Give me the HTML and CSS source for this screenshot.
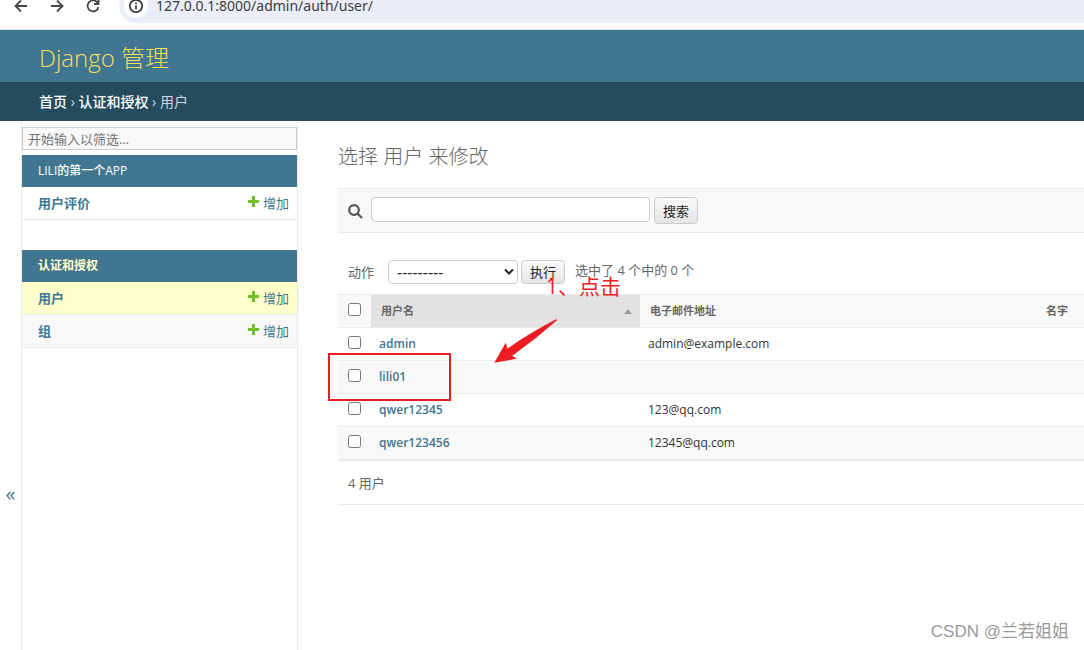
FILE: index.html
```html
<!DOCTYPE html>
<html lang="zh-CN">
<head>
<meta charset="utf-8">
<title>选择 用户 来修改 | Django 管理</title>
<link rel="stylesheet" href="styles.css">
</head>
<body>
<div class="browser-bar">
  <button class="nav-btn" aria-label="后退"><svg width="16" height="16" viewBox="0 0 16 16"><path d="M14 8H3M8 2.500L2.500 8L8 13.500"/></svg></button>
  <button class="nav-btn" aria-label="前进"><svg width="16" height="16" viewBox="0 0 16 16"><path d="M2 8H13M8 2.500L13.500 8L8 13.500"/></svg></button>
  <button class="nav-btn" aria-label="刷新"><svg width="16" height="16" viewBox="0 0 16 16"><path d="M12.800 5A5.500 5.500 0 1 0 13.500 9M13.500 1.500V6H9"/></svg></button>
  <div class="address">
    <span class="site-info"><svg width="16" height="16" viewBox="0 0 16 16"><circle cx="8" cy="8" r="6.200"/><path d="M8 7.200V11.300M8 4.500V6"/></svg></span>
    <span>127.0.0.1:8000/admin/auth/user/</span>
  </div>
</div>
<header class="site-header"><a href="#">Django 管理</a></header>
<nav class="breadcrumbs"><a href="#">首页</a> › <a href="#">认证和授权</a> › 用户</nav>
<div class="layout">
  <button class="sidebar-toggle" aria-label="切换导航">«</button>
  <aside class="sidebar">
    <input class="filter" type="search" placeholder="开始输入以筛选..." aria-label="筛选导航项">
    <section class="module">
      <h2><a href="#">LILI的第一个APP</a></h2>
      <div class="model"><a class="model-name" href="#">用户评价</a><a class="add" href="#"><svg width="11" height="11" viewBox="0 0 11 11"><path d="M4 0h3v4h4v3H7v4H4V7H0V4h4z"/></svg>增加</a></div>
    </section>
    <section class="module">
      <h2 class="current"><a href="#">认证和授权</a></h2>
      <div class="model selected"><a class="model-name" href="#">用户</a><a class="add" href="#"><svg width="11" height="11" viewBox="0 0 11 11"><path d="M4 0h3v4h4v3H7v4H4V7H0V4h4z"/></svg>增加</a></div>
      <div class="model alt"><a class="model-name" href="#">组</a><a class="add" href="#"><svg width="11" height="11" viewBox="0 0 11 11"><path d="M4 0h3v4h4v3H7v4H4V7H0V4h4z"/></svg>增加</a></div>
    </section>
  </aside>
  <main class="content">
    <h1>选择 用户 来修改</h1>
    <form class="toolbar">
      <label for="searchbar" aria-label="搜索"><svg width="15" height="15" viewBox="0 0 15 15"><circle cx="6" cy="6" r="4.800"/><path d="M9.500 9.500L14 14"/></svg></label>
      <input id="searchbar" type="text">
      <button class="btn" type="button">搜索</button>
    </form>
    <form class="actions">
      <label for="action">动作</label>
      <span class="select-box"><select id="action"><option>---------</option></select><svg width="10" height="8" viewBox="0 0 10 8"><path d="M1 1.500L5 5.500L9 1.500"/></svg></span>
      <button class="btn" type="button">执行</button>
      <span class="counter">选中了 4 个中的 0 个</span>
    </form>
    <div class="results">
      <table>
        <thead>
          <tr><th class="check"><input type="checkbox" aria-label="全选"></th><th class="name sorted"><div class="sort"><a href="#">用户名</a><span class="ascending"></span></div></th><th class="email"><a href="#">电子邮件地址</a></th><th><a href="#">名字</a></th></tr>
        </thead>
        <tbody>
          <tr><td class="check"><input type="checkbox" aria-label="admin"></td><th><a href="#">admin</a></th><td>admin@example.com</td><td></td></tr>
          <tr><td class="check"><input type="checkbox" aria-label="lili01"></td><th><a href="#">lili01</a></th><td></td><td></td></tr>
          <tr><td class="check"><input type="checkbox" aria-label="qwer12345"></td><th><a href="#">qwer12345</a></th><td>123@qq.com</td><td></td></tr>
          <tr><td class="check"><input type="checkbox" aria-label="qwer123456"></td><th><a href="#">qwer123456</a></th><td>12345@qq.com</td><td></td></tr>
        </tbody>
      </table>
    </div>
    <p class="paginator">4 用户</p>
  </main>
</div>
<div class="mark-box"></div>
<div class="mark-text">1、点击</div>
<svg class="mark-arrow" width="64" height="45" viewBox="0 0 64 45"><path d="M62 0.300Q34 15 13.500 29.500L11.700 23.700L0.300 43.700L22.700 39.700L18.300 36.700Q42 20 63.300 1Z"/></svg>
<div class="watermark">CSDN @兰若姐姐</div>
</body>
</html>
```
FILE: styles.css
```css
* { box-sizing: border-box; }
body {
  margin: 0;
  min-height: 100vh;
  display: flex;
  flex-direction: column;
  overflow: hidden;
  background: #fff;
  color: #333;
  font: 13px/20px "Open Sans", "Noto Sans CJK SC", sans-serif;
}
a { color: #417690; text-decoration: none; }
button, input, select { font: inherit; }
svg { flex: none; }

.browser-bar {
  display: flex;
  height: 30px;
  padding-left: 13px;
  gap: 19px;
  border-bottom: 1px solid #dfe3e6;
  overflow: hidden;
}
.nav-btn {
  width: 17px;
  height: 16px;
  margin-top: -2px;
  padding: 0;
  border: 0;
  background: none;
}
.nav-btn svg { display: block; fill: none; stroke: #474747; stroke-width: 1.8; }
.address {
  flex: 1;
  display: flex;
  align-items: center;
  gap: 8px;
  height: 34px;
  margin-top: -11px;
  margin-left: -2px;
  padding-left: 5px;
  border-radius: 17px 0 0 17px;
  background: #ebeef8;
  color: #3c3c3c;
  font-size: 14px;
  font-family: "Noto Sans", sans-serif;
}
.site-info {
  display: flex;
  align-items: center;
  justify-content: center;
  width: 24px;
  height: 24px;
  border-radius: 50%;
  background: #fff;
}
.site-info svg { fill: none; stroke: #333; stroke-width: 1.7; }

.site-header { padding: 12px 39px 8px; background: #417690; font-size: 24px; font-weight: 300; line-height: 32px; }
.site-header a { color: #f5dd5d; }
.breadcrumbs { padding: 10px 39px 9px; background: #264b5d; color: #c4dce8; font-size: 14px; }
.breadcrumbs a { color: #fff; font-weight: 500; }

.layout { flex: 1; display: flex; }
.sidebar-toggle {
  width: 22px;
  padding: 216px 0 0;
  border: 0;
  border-right: 1px solid #eaeaea;
  background: #fff;
  color: #417690;
  font-size: 20px;
}
.sidebar { width: 276px; flex: none; padding-top: 6px; border-right: 1px solid #eaeaea; }
.filter {
  display: block;
  width: 100%;
  height: 23px;
  margin-bottom: 5px;
  padding: 0 5px;
  border: 1px solid #ccc;
  border-radius: 0;
  background: #f8f8f8;
  appearance: none;
}
.filter::placeholder { color: #757575; }
.module { margin-bottom: 30px; }
.module h2 { margin: 0; padding: 6px 16px; background: #417690; font-size: 12px; font-weight: 500; }
.module h2 a { color: #fff; }
.module h2.current { font-weight: 700; }
.module h2.current a { color: #ffc; }
.model { display: flex; justify-content: space-between; padding: 6px 8px 6px 16px; border-bottom: 1px solid #eaeaea; }
.model-name { font-weight: 600; }
.add { display: flex; gap: 4px; }
.add svg { margin-top: 3px; fill: #70bf2b; }
.selected { background: #ffc; }
.alt { background: #f8f8f8; }

.content { flex: 1; min-width: 0; padding: 21px 0 0 40px; }
.content h1 { margin: 0 0 16px; color: #666; font-size: 20px; font-weight: 300; line-height: 30px; }
.toolbar {
  display: flex;
  align-items: flex-start;
  padding: 8px 10px;
  border: solid #eaeaea;
  border-width: 1px 0;
  background: #f8f8f8;
}
.toolbar label { display: flex; width: 23px; padding-top: 7px; }
.toolbar label svg { fill: none; stroke: #555; stroke-width: 2.2; }
.toolbar input { width: 279px; height: 25px; margin-right: 4px; border: 1px solid #ccc; border-radius: 4px; }
.btn {
  width: 44px;
  height: 27px;
  padding: 0;
  border: 1px solid #ccc;
  border-radius: 4px;
  background: linear-gradient(#fafafa, #e4e4e4);
  color: #222;
}
.actions { display: flex; align-items: center; padding: 27px 10px 10px; color: #666; }
.actions label { width: 40px; }
.actions .btn { height: 24px; margin: 0 10px 0 3px; }
.select-box { display: grid; align-items: center; width: 130px; }
.select-box > * { grid-area: 1 / 1; }
.select-box select {
  width: 100%;
  height: 24px;
  padding: 0 8px;
  border: 1px solid #ccc;
  border-radius: 4px;
  background: #fff;
  color: #222;
  font-size: 16px;
  appearance: none;
}
.select-box svg { justify-self: end; margin-right: 4px; fill: none; stroke: #222; stroke-width: 2; pointer-events: none; }
.counter { padding-bottom: 4px; }

.results { overflow: hidden; }
table { width: 100%; border-collapse: separate; border-spacing: 0; table-layout: fixed; font-size: 12px; }
th, td { height: 33px; padding: 0 8px; border-bottom: 1px solid #eaeaea; text-align: left; }
thead th { height: 34px; padding: 0 10px; border-top: 1px solid #eaeaea; background: #f8f8f8; font-size: 11px; font-weight: 700; white-space: nowrap; }
thead a { color: #666; }
tbody th { font-weight: 600; }
tbody tr:nth-child(even) { background: #f8f8f8; }
tbody tr:last-child > * { height: 34px; border-bottom-width: 2px; }
.name { width: 269px; }
.email { width: 396px; }
th.check, td.check { width: 33px; padding: 0 0 4px 10px; line-height: 0; }
.check input { width: 13px; height: 13px; margin: 0; }
thead .sorted { padding-right: 8px; background: #e2e2e2; }
.sort { display: flex; align-items: center; justify-content: space-between; }
.ascending { border: solid transparent; border-width: 0 4px 5px; border-bottom-color: #999; }
.paginator { margin: 0; padding: 12px 10px 11px; border-bottom: 1px solid #eaeaea; color: #666; }

.mark-box { position: absolute; left: 328px; top: 353px; width: 123px; height: 48px; border: 2px solid #ed1c24; }
.mark-text { position: absolute; left: 546px; top: 271px; color: #ed1c24; font-size: 21px; line-height: 30px; }
.mark-arrow { position: absolute; left: 494px; top: 319px; fill: #ed1c24; }
.watermark { position: absolute; right: 15px; bottom: 6px; color: #999; font: 17px/24px "Liberation Sans", "Noto Sans CJK SC", sans-serif; }
```
